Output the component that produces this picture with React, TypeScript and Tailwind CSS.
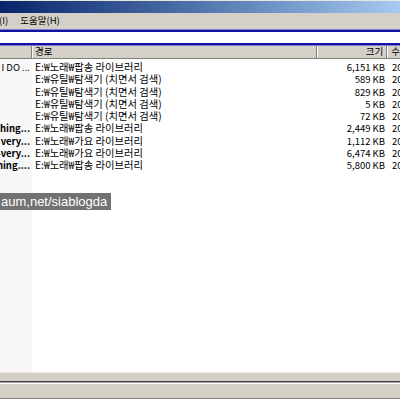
import React from "react";

type Row = { name: string; bold?: boolean; path: string; size: string };

const rows: Row[] = [
  { name: "I DO ...", path: "E:₩노래₩팝송 라이브러리", size: "6,151 KB" },
  { name: "", path: "E:₩유틸₩탐색기 (치면서 검색)", size: "589 KB" },
  { name: "", path: "E:₩유틸₩탐색기 (치면서 검색)", size: "829 KB" },
  { name: "", path: "E:₩유틸₩탐색기 (치면서 검색)", size: "5 KB" },
  { name: "", path: "E:₩유틸₩탐색기 (치면서 검색)", size: "72 KB" },
  { name: "thing...", bold: true, path: "E:₩노래₩팝송 라이브러리", size: "2,449 KB" },
  { name: "very...", bold: true, path: "E:₩노래₩가요 라이브러리", size: "1,112 KB" },
  { name: "-very...", bold: true, path: "E:₩노래₩가요 라이브러리", size: "6,474 KB" },
  { name: "thing....", bold: true, path: "E:₩노래₩팝송 라이브러리", size: "5,800 KB" },
];

const font = { fontFamily: '"Noto Sans CJK KR", "Liberation Sans", sans-serif' };

export default function App() {
  return (
    <div className="w-[400px] h-[400px] overflow-hidden bg-[#d4d0c8] flex flex-col text-[9.5px] text-black" style={font}>
      {/* title bar */}
      <div className="h-[1px] bg-[#e8e6e0]" />
      <div className="h-[12px] bg-gradient-to-r from-[#0a246a] to-[#a6caf0]" />

      {/* menu bar */}
      <div className="h-[16px] flex items-center gap-[12px] leading-none">
        <span className="-ml-[1px]">(I)</span>
        <span>도움말(H)</span>
      </div>

      {/* blue bordered strip */}
      <div className="h-[1px] bg-[#7b7be0]" />
      <div className="h-[2px] bg-[#12129c]" />
      <div className="h-[11px] bg-white" />
      <div className="h-[2px] bg-[#12129c]" />
      <div className="h-[1px] bg-[#7b7be0]" />

      {/* column header */}
      <div className="h-[13px] flex items-center leading-none border-b border-[#808080]">
        <div className="w-[32px] h-full border-r border-[#808080]" />
        <div className="w-[286px] h-full border-l border-white border-r border-r-[#808080] pl-[2px] flex items-center">경로</div>
        <div className="w-[70px] h-full border-l border-white border-r border-r-[#808080] pr-[3px] flex items-center justify-end">크기</div>
        <div className="flex-1 h-full border-l border-white pl-[3px] flex items-center">수</div>
      </div>

      {/* list */}
      <div className="relative flex-1 flex bg-white">
        <div className="w-[32px] bg-[#f7f7f7]" />
        <div className="flex-1" />
        <div className="absolute inset-0 pt-[2px] flex flex-col">
          {rows.map((r, i) => (
            <div key={i} className="h-[12.25px] flex items-center leading-[12px] whitespace-nowrap">
              <div className={"w-[32px] overflow-hidden flex justify-end pr-[2px] " + (r.bold ? "font-bold" : "")}>
                <span>{r.name}</span>
              </div>
              <div className="w-[286px] pl-[3px] text-[10.3px]">{r.path}</div>
              <div className="w-[70px] text-right pr-[3px]">{r.size}</div>
              <div className="flex-1 pl-[4px] overflow-hidden">20</div>
            </div>
          ))}
          <div className="mt-[22px] w-[111px] h-[17px] bg-[#727272] flex items-center text-white text-[13px] leading-none pl-[1px]" style={{ fontFamily: '"Liberation Sans", sans-serif' }}>
            aum,net/siablogda
          </div>
        </div>
      </div>

      {/* bottom bars */}
      <div className="h-[1px] bg-[#ecebe6]" />
      <div className="h-[8px] bg-[#d4d0c8]" />
      <div className="h-[1px] bg-[#404040]" />
      <div className="h-[1px] bg-[#a0a0a0]" />
      <div className="h-[1px] bg-white" />
      <div className="h-[14px] bg-[#d4d0c8]" />
      <div className="h-[1px] bg-[#808080]" />
      <div className="h-[1px] bg-white" />
    </div>
  );
}
